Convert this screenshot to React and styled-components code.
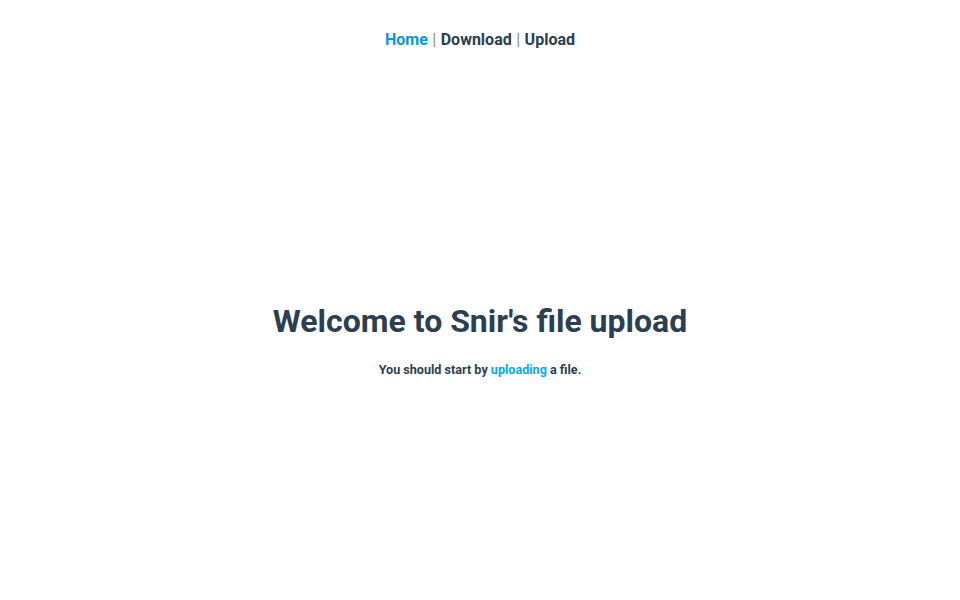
import React from 'react'
import styled, { createGlobalStyle } from 'styled-components'

const GlobalStyle = createGlobalStyle`
  html, body {
    margin: 0;
    padding: 0;
    background: #fff;
  }
  body {
    font-family: Roboto, "Liberation Sans", sans-serif;
    color: #2c3e50;
  }
`

const Page = styled.div`
  display: flex;
  flex-direction: column;
  min-height: 600px;
  text-align: center;
`

const Nav = styled.nav`
  padding: 30px 0 0;
  font-size: 16px;
  font-weight: 700;
  line-height: 19px;
`

const NavLink = styled.a`
  color: ${props => (props.active ? '#0a96e0' : '#2c3e50')};
  text-decoration: none;
`

const Sep = styled.span`
  color: #7f8c9a;
  font-weight: 400;
  margin: 0 4.5px;
`

const Main = styled.main`
  flex: 1;
  display: flex;
  flex-direction: column;
  align-items: center;
  justify-content: center;
  padding-top: 29px;
`

const Title = styled.h1`
  margin: 0;
  font-size: 32px;
  font-weight: 700;
  line-height: 38px;
`

const Lead = styled.p`
  margin: 22px 0 0;
  font-size: 12.6px;
  line-height: 15px;
  font-weight: 700;
`

const Inline = styled.a`
  color: #03a9f4;
  text-decoration: none;
`

export default function App() {
  return (
    <Page>
      <GlobalStyle />
      <Nav>
        <NavLink href="#" active>Home</NavLink>
        <Sep>|</Sep>
        <NavLink href="#">Download</NavLink>
        <Sep>|</Sep>
        <NavLink href="#">Upload</NavLink>
      </Nav>
      <Main>
        <Title>Welcome to Snir's file upload</Title>
        <Lead>
          You should start by <Inline href="#">uploading</Inline> a file.
        </Lead>
      </Main>
    </Page>
  )
}
